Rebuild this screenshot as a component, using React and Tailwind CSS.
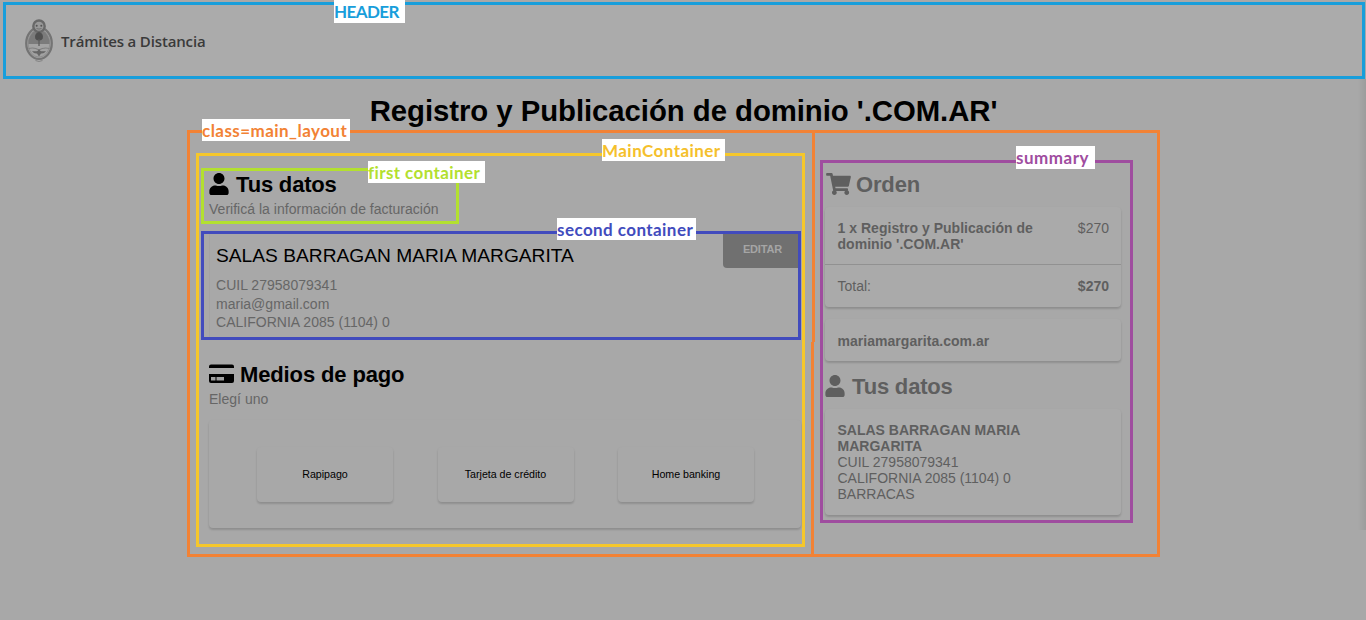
import { FaShoppingCart, FaUser } from "react-icons/fa";

const cardShadow = "shadow-[0_2px_2px_rgba(0,0,0,0.12),0_1px_3px_rgba(0,0,0,0.05)]";

function Label({ className, children }) {
  return (
    <span
      className={`absolute z-10 whitespace-nowrap bg-white pt-px font-['Lato',sans-serif] text-[17px] font-bold leading-[22px] ${className}`}
    >
      {children}
    </span>
  );
}

function Emblem() {
  return (
    <svg width="30" height="44" viewBox="0 0 30 44" fill="none" className="shrink-0">
      <ellipse cx="15" cy="24.300" rx="12.8" ry="15.700" fill="#a3a3a3" stroke="#747474" strokeWidth="2.2" />
      <ellipse cx="15" cy="24.300" rx="10.9" ry="13.800" stroke="#8a8a8a" strokeWidth="0.8" />
      <path d="M4.300 25a10.700 14 0 0 1 21.400 0Z" fill="#7b7b7b" />
      <circle cx="15" cy="7.200" r="5.700" fill="#989898" stroke="#686868" strokeWidth="2.400" />
      <circle cx="12.7" cy="6.8" r="1" fill="#555" />
      <circle cx="17.3" cy="6.8" r="1" fill="#555" />
      <path d="M12.500 9.500q2.500 1.200 5 0" stroke="#707070" />
      <path d="M11.200 19.500q-1-5.500 3.800-6.500 4.800 1 3.800 6.500-1.500 2.500-3.800 2-2.300.5-3.800-2Z" fill="#505050" />
      <path d="M15 20v7" stroke="#5c5c5c" strokeWidth="1.3" />
      <path d="M4.500 29.500q6-1.500 10.500 1.500 4.500-3 10.500-1.500" stroke="#808080" strokeWidth="1.2" />
      <path d="M8 32q3.500.5 5.500 0l1.500-2 1.500 2q2 .5 5.500 0-2 3-5 2.500L15 37.500l-2-3Q10 35 8 32Z" fill="#666" />
      <path d="M11.500 41.500l3.500 1 3.500-1" stroke="#858585" strokeWidth="1.2" />
    </svg>
  );
}

function PaymentIcon() {
  return (
    <svg width="25" height="20" viewBox="0 0 25 20" className="mb-[2px] shrink-0">
      <path d="M0 4V2.500Q0 .5 2 .5h21q2 0 2 2V4ZM0 10h25v7q0 2-2 2H2q-2 0-2-2Z" fill="#000" />
      <path d="M2 13h4.500v3.500H2ZM7.500 13h7.500v3.500H7.500Z" fill="#a0a0a0" />
    </svg>
  );
}

function Header() {
  return (
    <header className="relative ml-[3px] mt-[2px] flex h-[77px] w-[1362px] items-center border-[3px] border-[#189edb] bg-[#ababab] pl-[18px]">
      <Emblem />
      <span className="ml-[7px] pt-[2px] font-['Open_Sans',sans-serif] text-[15px] font-semibold tracking-[-0.15px] text-[#3a3a3a]">
        Trámites a Distancia
      </span>
      <Label className="left-[328px] top-[-5px] h-[23px] w-[71px] tracking-[-0.6px] text-[#189edb]">HEADER</Label>
    </header>
  );
}

function Payment({ children }) {
  return (
    <button className={`h-[55px] w-[136px] rounded-[4px] pb-[2px] text-[10.67px] tracking-[-0.02px] text-black ${cardShadow} bg-[#a8a8a8]`}>
      {children}
    </button>
  );
}

function MainContainer() {
  return (
    <section className="relative ml-[6px] mt-[20px] h-[394px] w-[609px] border-[3px] border-[#f5c72c]">
      <Label className="left-[403px] top-[-17px] h-[22px] w-[123px] tracking-[0.45px] text-[#f5c02c]">MainContainer</Label>

      <div className="relative ml-[2px] mt-[12px] h-[56px] w-[258px] border-[3px] border-[#b3e02f] pl-[5px] pt-px">
        <Label className="left-[164px] top-[-10px] h-[22px] w-[117px] tracking-[0.4px] text-[#b3e02f]">first container</Label>
        <h2 className="flex h-[25px] items-center gap-[7px] text-[22px] font-bold leading-[25px] tracking-[-0.18px] text-black">
          <FaUser className="mb-[2px] h-[22px] w-[20px]" />
          Tus datos
        </h2>
        <p className="mt-[3px] text-[14px] leading-[18px] tracking-[0.02px] text-[#666]">Verificá la información de facturación</p>
      </div>

      <div className="relative ml-[2px] mt-[7px] flex h-[109px] w-[600px] items-start justify-between border-[3px] border-[#414bbd] pl-[5px]">
        <Label className="left-[353px] top-[-16px] h-[22px] w-[139px] tracking-[0.43px] text-[#414bbd]">second container</Label>
        <div className="h-[103px] border-l border-[#a3a3a3] pl-[6px] pt-[10px]">
          <h3 className="text-[19.2px] leading-[23px] text-black">SALAS BARRAGAN MARIA MARGARITA</h3>
          <div className="mt-[9px] text-[14px] leading-[18.500px] tracking-[0.02px] text-[#666]">
            <p>CUIL 27958079341</p>
            <p>maria@gmail.com</p>
            <p>CALIFORNIA 2085 (1104) 0</p>
          </div>
        </div>
        <button className="h-[34px] w-[75px] rounded-bl-[4px] bg-[#707070] pb-[3px] pl-[4px] text-[11px] font-bold tracking-[-0.15px] text-[#a5a5a5]">
          EDITAR
        </button>
      </div>

      <div className="ml-[10px] mt-[22px]">
        <h2 className="flex h-[25px] items-center gap-[6px] text-[22px] font-bold leading-[25px] tracking-[-0.13px] text-black">
          <PaymentIcon />
          Medios de pago
        </h2>
        <p className="mt-[3px] text-[14px] leading-[18px] tracking-[0.02px] text-[#666]">Elegí uno</p>
        <div className={`mt-[12px] flex h-[108px] w-[592px] gap-[44.500px] rounded-[4px] bg-[#a8a8a8] pl-[48px] pt-[27px] ${cardShadow}`}>
          <Payment>Rapipago</Payment>
          <Payment>Tarjeta de crédito</Payment>
          <Payment>Home banking</Payment>
        </div>
      </div>
    </section>
  );
}

function Summary() {
  return (
    <aside className="relative ml-[5px] mt-[27px] h-[363px] w-[313px] border-[3px] border-[#9f4d9f] pl-[2px] text-[14px] leading-[16px] text-[#5f5f5f]">
      <Label className="left-[193px] top-[-17px] h-[23px] w-[79px] tracking-[0.5px] text-[#9f4d9f]">summary</Label>
      <h2 className="ml-px mt-[9px] flex h-[25px] items-center gap-[5px] text-[22px] font-bold leading-[25px] tracking-[-0.15px]">
        <FaShoppingCart className="mb-[2px] h-[22px] w-[25px]" />
        Orden
      </h2>
      <div className={`mt-[10px] h-[100px] w-[296px] rounded-[4px] bg-[#aaa] ${cardShadow}`}>
        <div className="flex h-[58px] items-start justify-between border-b border-[#919191] pl-[12.500px] pr-[12px] pt-[13px]">
          <p className="w-[205px] font-bold tracking-[0.03px]">1 x Registro y Publicación de dominio '.COM.AR'</p>
          <span>$270</span>
        </div>
        <div className="flex h-[42px] items-center justify-between pl-[12.500px] pr-[12px]">
          <span>Total:</span>
          <b>$270</b>
        </div>
      </div>
      <div className={`mt-[12px] flex h-[42px] w-[296px] items-center rounded-[4px] bg-[#aaa] pl-[12.500px] pt-[2px] font-bold tracking-[0.04px] ${cardShadow}`}>
        mariamargarita.com.ar
      </div>
      <h2 className="mt-[13px] flex h-[25px] items-center gap-[7px] text-[22px] font-bold leading-[25px] tracking-[-0.18px]">
        <FaUser className="mb-[2px] h-[22px] w-[20px]" />
        Tus datos
      </h2>
      <div className={`mt-[10px] h-[106px] w-[296px] rounded-[4px] bg-[#aaa] pl-[12.500px] pt-[13px] ${cardShadow}`}>
        <p className="w-[205px] font-bold">SALAS BARRAGAN MARIA MARGARITA</p>
        <p>CUIL 27958079341</p>
        <p>CALIFORNIA 2085 (1104) 0</p>
        <p>BARRACAS</p>
      </div>
    </aside>
  );
}

export default function App() {
  return (
    <div className="relative flex h-[620px] w-[1366px] flex-col overflow-hidden bg-[#a8a8a8] font-['Liberation_Sans',Arial,sans-serif]">
      <Header />
      <h1 className="mt-[13px] h-[38px] pl-px text-center text-[29.33px] font-bold leading-[38px] tracking-[-0.05px] text-black">
        Registro y Publicación de dominio '.COM.AR'
      </h1>
      <main className="relative ml-[187px] flex h-[427px] w-[973px] border-[3px] border-[#f28235]">
        <Label className="left-[12px] top-[-14px] h-[22px] w-[148px] tracking-[0.45px] text-[#f28235]">class=main_layout</Label>
        <div className="w-[621px] shrink-0">
          <MainContainer />
        </div>
        <div className="flex w-[4px] shrink-0 flex-col">
          <div className="ml-px h-[209px] w-[3px] bg-[#f28235]" />
          <div className="w-[3px] flex-1 bg-[#f28235]" />
        </div>
        <Summary />
      </main>
      <div className="absolute right-0 top-[79px] h-[451px] w-[8px] bg-linear-to-r from-[#a8a8a8] to-[#9c9c9c]" />
    </div>
  );
}
